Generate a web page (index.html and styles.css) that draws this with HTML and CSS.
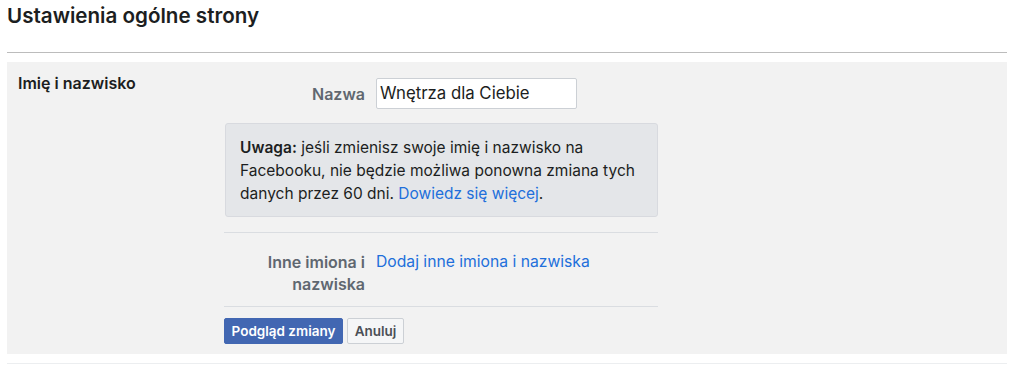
FILE: index.html
```html
<!DOCTYPE html>
<html lang="pl">
<head>
<meta charset="utf-8">
<link rel="stylesheet" href="styles.css">
</head>
<body>
<div class="page">
  <h1 class="title">Ustawienia ogólne strony</h1>
  <div class="rule"></div>
  <div class="panel">
    <div class="section-label">Imię i nazwisko</div>
    <div class="form">
      <div class="row row-name">
        <div class="label">Nazwa</div>
        <div class="control"><div class="input">Wnętrza dla Ciebie</div></div>
      </div>
      <div class="notice"><b>Uwaga:</b> jeśli zmienisz swoje imię i nazwisko na Facebooku, nie będzie możliwa ponowna zmiana tych danych przez 60 dni. <a class="link">Dowiedz się więcej</a>.</div>
      <div class="sep"></div>
      <div class="row row-other">
        <div class="label">Inne imiona i nazwiska</div>
        <div class="control"><a class="link">Dodaj inne imiona i nazwiska</a></div>
      </div>
      <div class="sep"></div>
      <div class="buttons">
        <span class="btn btn-primary">Podgląd zmiany</span>
        <span class="btn btn-secondary">Anuluj</span>
      </div>
    </div>
  </div>
  <div class="rule-light"></div>
</div>
</body>
</html>
```
FILE: styles.css
```css
* { box-sizing: border-box; }
html, body { margin: 0; padding: 0; background: #fff; }
body { font-family: Inter, "Liberation Sans", Arial, sans-serif; color: #1c1e21; }
.page { width: 1000px; margin-left: 7px; }
.title { margin: 0; padding-top: 4px; height: 52px; font-size: 20.6px; font-weight: 600; line-height: 24px; color: #1c1e21; }
.rule { height: 1px; background: #bcbcbc; }
.panel { margin-top: 9px; background: #f2f2f2; display: flex; padding: 12px 0 10px 11px; }
.section-label { width: 206px; font-size: 16px; font-weight: 600; line-height: 18px; color: #1c1e21; }
.form { width: 434px; }
.row { display: flex; }
.label { width: 141px; text-align: right; font-size: 16px; font-weight: 600; color: #606770; line-height: 22px; }
.control { margin-left: 11px; }
.row-name { margin-top: 4px; align-items: center; }
.input { width: 201px; height: 31px; background: #fff; border: 1px solid #ccd0d5; border-radius: 2px; padding: 0 3px; font-size: 16.8px; line-height: 29px; color: #1c1e21; }
.notice { margin-top: 14px; margin-left: 1px; background: #e4e6e9; border: 1px solid #d8dadf; border-radius: 3px; padding: 12px 14px 12px 14px; font-size: 15.5px; line-height: 23px; color: #1c1e21; height: 94px; }
.notice b { font-weight: 600; }
.link { color: #216fdb; text-decoration: none; }
.sep { height: 1px; background: #dadde1; margin: 15px 0 0 0; }
.row-other { padding-top: 18px; padding-bottom: 11px; }
.row-other .label { line-height: 22px; }
.row-other .control { font-size: 15.7px; line-height: 22px; }
.row-other + .sep { margin-top: 0; }
.buttons { display: flex; gap: 4px; margin-top: 11px; }
.btn { display: inline-flex; align-items: center; justify-content: center; height: 26px; font-size: 13.5px; font-weight: 600; padding: 0 4px; border-radius: 2px; border: 1px solid; }
.btn-primary { background: #4267b2; border-color: #4267b2; color: #fff; width: 119px; }
.btn-secondary { background: #f5f6f7; border-color: #ccd0d5; color: #4b4f56; width: 57px; }
.rule-light { margin-top: 9px; height: 1px; background: #eceef0; }
```
